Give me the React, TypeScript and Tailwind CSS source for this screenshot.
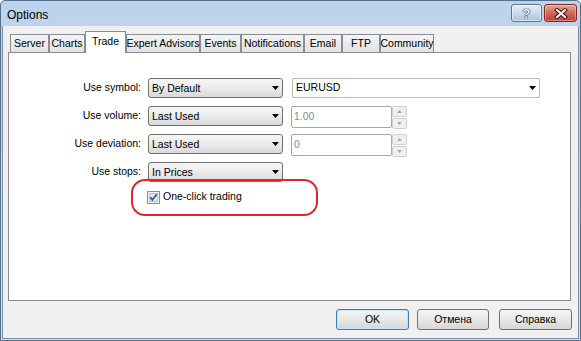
import React from 'react';

const font = "font-['Liberation_Sans',Arial,sans-serif]";

const tabs = [
  { label: 'Server', cls: 'ml-[2px] w-[39px]' },
  { label: 'Charts', cls: 'w-[36px]' },
  { label: 'Trade', cls: 'w-[41px]', active: true },
  { label: 'Expert Advisors', cls: 'w-[74px]' },
  { label: 'Events', cls: 'w-[41px]' },
  { label: 'Notifications', cls: 'w-[63px]' },
  { label: 'Email', cls: 'w-[38px]' },
  { label: 'FTP', cls: 'w-[38px]' },
  { label: 'Community', cls: 'w-[54px]' },
];

const DropArrow = () => (
  <svg width="7" height="4" viewBox="0 0 7 4" className="shrink-0">
    <path d="M0 0H7L3.5 4Z" fill="#000" />
  </svg>
);

const Combo = ({ value }: { value: string }) => (
  <div className="flex h-[20px] w-[135px] items-center justify-between rounded-[3px] border border-[#707070] bg-linear-to-b from-[#f6f6f6] via-[#ebebeb] to-[#d8d8d8] pl-[3px] pr-[3px]">
    <span className="leading-none text-black">{value}</span>
    <DropArrow />
  </div>
);

const Spinner = () => (
  <div className="flex w-[15px] flex-col gap-[1px]">
    {[0, 1].map((i) => (
      <div
        key={i}
        className="flex h-[11px] items-center justify-center rounded-[2px] border border-[#d0d0d0] bg-[#f0f0f0]"
      >
        <svg width="5" height="3" viewBox="0 0 5 3">
          <path d={i === 0 ? 'M0 3H5L2.5 0Z' : 'M0 0H5L2.5 3Z'} fill="#a8a8a8" />
        </svg>
      </div>
    ))}
  </div>
);

const NumInput = ({ value }: { value: string }) => (
  <div className="ml-[2px] flex items-start">
    <div className="flex h-[22px] w-[101px] items-center rounded-[2px] border border-[#a8a8a8] bg-white pl-[2px] text-[#8a8a8a]">
      {value}
    </div>
    <Spinner />
  </div>
);

const Label = ({ text }: { text: string }) => (
  <div className="flex h-[20px] w-[133px] items-center justify-end pr-[1px] text-black">{text}</div>
);

const Button = ({ label, primary }: { label: string; primary?: boolean }) => (
  <div
    className={`flex h-[21px] items-center justify-center rounded-[3px] border bg-linear-to-b from-[#f4f4f4] via-[#e8e8e8] to-[#d6d6d6] text-black ${
      primary ? 'border-[#3c7fb1] shadow-[inset_0_0_0_1px_#bfe3f7]' : 'border-[#707070]'
    }`}
  >
    {label}
  </div>
);

export default function App() {
  return (
    <div className={`${font} flex h-[341px] w-[581px] flex-col overflow-hidden rounded-t-[5px] border border-[#53718f] bg-linear-to-b from-[#bcd3ec] to-[#cfe0f2] text-[10.5px]`}>
      {/* Title bar */}
      <div className="flex h-[25px] shrink-0 items-start justify-between">
        <span className="mt-[5px] ml-[6px] text-[12px] text-black">Options</span>
        <div className="mt-[3px] mr-[3px] flex gap-[2px]">
          <div className="flex h-[18px] w-[31px] items-center justify-center rounded-[3px] border border-[#5a7393] bg-linear-to-b from-[#e4edf7] via-[#cbdaeb] to-[#aac2de] shadow-[inset_0_0_0_1px_rgba(255,255,255,0.6)]">
            <span className="text-[13px] font-bold leading-none text-[#f2f6fb] [text-shadow:0_0_1px_#1f2f45,0_0_1px_#1f2f45,0_0_1px_#1f2f45]">
              ?
            </span>
          </div>
          <div className="flex h-[18px] w-[33px] items-center justify-center rounded-[3px] border border-[#7d2a22] bg-linear-to-b from-[#e8a597] via-[#d0675a] to-[#c1412f] shadow-[inset_0_0_0_1px_rgba(255,255,255,0.35)]">
            <svg width="14" height="11" viewBox="0 0 14 11">
              <path d="M3 2L11 9M11 2L3 9" stroke="#3b1410" strokeWidth="4" strokeLinecap="square" />
              <path d="M3 2L11 9M11 2L3 9" stroke="#fff" strokeWidth="2" strokeLinecap="square" />
            </svg>
          </div>
        </div>
      </div>

      {/* Client area */}
      <div className="mx-[1px] mb-[1px] flex flex-1 flex-col border-x border-b border-[#7d8fa6] bg-[#f0f0f0]">
        {/* Tab strip */}
        <div className="mt-[5px] ml-[5px] flex h-[21px] items-end">
          {tabs.map((t) => (
            <div
              key={t.label}
              className={`${t.cls} flex items-center justify-center border border-b-0 border-[#898c95] whitespace-nowrap text-black ${
                t.active
                  ? 'relative z-10 -mb-px h-[22px] bg-white pb-[2px]'
                  : 'h-[18px] bg-linear-to-b from-[#f5f5f5] to-[#e2e2e2]'
              }`}
            >
              {t.label}
            </div>
          ))}
        </div>

        {/* Tab page */}
        <div className="relative mr-[7px] ml-[5px] h-[249px] border border-[#898c95] bg-white pt-[25px]">
          <div className="flex h-[28px] items-start gap-[6px]">
            <Label text="Use symbol:" />
            <Combo value="By Default" />
            <div className="ml-[3px] flex h-[20px] w-[248px] items-center justify-between rounded-[2px] border border-[#b5b8c0] bg-white pl-[3px] pr-[3px] text-black">
              <span>EURUSD</span>
              <DropArrow />
            </div>
          </div>
          <div className="flex h-[28px] items-start gap-[6px]">
            <Label text="Use volume:" />
            <Combo value="Last Used" />
            <NumInput value="1.00" />
          </div>
          <div className="flex h-[28px] items-start gap-[6px]">
            <Label text="Use deviation:" />
            <Combo value="Last Used" />
            <NumInput value="0" />
          </div>
          <div className="flex h-[28px] items-start gap-[6px]">
            <Label text="Use stops:" />
            <Combo value="In Prices" />
          </div>
          <div className="ml-[138px] flex h-[14px] items-center gap-[3px]">
            <svg width="13" height="13" viewBox="0 0 13 13">
              <rect x="0.5" y="0.5" width="12" height="12" fill="#f4f4f4" stroke="#8e8f8f" />
              <rect x="2.5" y="2.5" width="8" height="8" fill="#dfe6ef" stroke="#b8c1cc" />
              <path d="M3.3 6.3L5.4 8.8L9.8 3.2" fill="none" stroke="#3c5a96" strokeWidth="1.8" />
            </svg>
            <span className="text-black">One-click trading</span>
          </div>

          {/* annotation */}
          <div className="absolute top-[126px] left-[122px] h-[37px] w-[187px] rounded-[14px] border-2 border-[#e1252d]" />
        </div>

        {/* Dialog buttons */}
        <div className="mt-[8px] mr-[6px] flex justify-end">
          <div className="w-[73px]">
            <Button label="OK" primary />
          </div>
          <div className="ml-[8px] w-[72px]">
            <Button label="Отмена" />
          </div>
          <div className="ml-[10px] w-[73px]">
            <Button label="Справка" />
          </div>
        </div>
      </div>
    </div>
  );
}
